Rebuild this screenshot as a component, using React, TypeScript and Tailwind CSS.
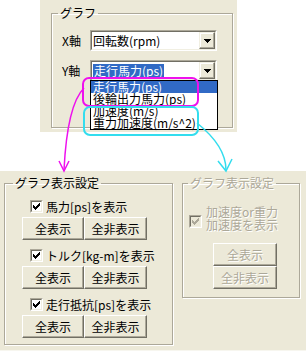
import React from "react";

const GRAY = "bg-[#ECE9D8]";

function Check({ disabled = false }: { disabled?: boolean }) {
  return (
    <div
      className={`w-[13px] h-[13px] shrink-0 border border-t-[#ACA899] border-l-[#ACA899] border-b-white border-r-white`}
    >
      <div
        className={`w-full h-full border border-t-[#716F64] border-l-[#716F64] border-b-[#F1EFE2] border-r-[#F1EFE2] flex items-center justify-center ${
          disabled ? "bg-[#ECE9D8]" : "bg-white"
        }`}
      >
        <svg width="7" height="7" viewBox="0 0 7 7" shapeRendering="crispEdges">
          <path
            d="M6 0h1v3h-1zM5 1h1v3h-1zM4 2h1v3h-1zM3 3h1v3h-1zM2 4h1v3h-1zM1 3h1v3h-1zM0 2h1v3h-1z"
            fill={disabled ? "#ACA899" : "#000"}
          />
        </svg>
      </div>
    </div>
  );
}

function Btn({
  label,
  w,
  disabled = false,
}: {
  label: string;
  w: string;
  disabled?: boolean;
}) {
  return (
    <div
      className={`${w} h-[23px] ${GRAY} border border-t-white border-l-white border-r-[#716F64] border-b-[#716F64] shadow-[inset_-1px_-1px_0_#ACA899] flex items-center justify-center leading-[14px] ${
        disabled ? "text-[#ACA899] [text-shadow:1px_1px_0_#fff]" : "text-black"
      }`}
    >
      {label}
    </div>
  );
}

function ComboBtn() {
  return (
    <div
      className={`w-[16px] h-[17px] ${GRAY} border border-t-[#F1EFE2] border-l-[#F1EFE2] border-r-[#716F64] border-b-[#716F64] shadow-[inset_-1px_-1px_0_#ACA899,inset_1px_1px_0_#fff] flex items-center justify-center`}
    >
      <svg width="7" height="4" viewBox="0 0 7 4" shapeRendering="crispEdges">
        <path d="M0 0h7v1h-7zM1 1h5v1h-5zM2 2h3v1h-3zM3 3h1v1h-1z" fill="#000" />
      </svg>
    </div>
  );
}

function Combo({ children }: { children: React.ReactNode }) {
  return (
    <div className="w-[127px] h-[21px] border border-t-[#ACA899] border-l-[#ACA899] border-b-white border-r-white">
      <div className="w-full h-full border border-t-[#716F64] border-l-[#716F64] border-b-[#F1EFE2] border-r-[#F1EFE2] bg-white flex items-center justify-between">
        <div className="pl-[1px] flex items-center leading-[14px]">{children}</div>
        <ComboBtn />
      </div>
    </div>
  );
}

const frame =
  "border border-[#ACA899] shadow-[1px_1px_0_#fff,inset_1px_1px_0_#fff]";

function Section({ label }: { label: string }) {
  return (
    <>
      <div className="flex items-center gap-[3px] pl-[25px] h-[13px]">
        <Check />
        <span className="leading-[13px] whitespace-nowrap">{label}</span>
      </div>
      <div className="flex pl-[17px] mt-[4px]">
        <Btn label="全表示" w="w-[62px]" />
        <Btn label="全非表示" w="w-[63px]" />
      </div>
    </>
  );
}

export default function App() {
  return (
    <div className="relative w-[306px] h-[351px] bg-white overflow-hidden font-['Noto_Sans_CJK_JP',sans-serif] text-[12px] text-black">
      {/* top panel */}
      <div className={`ml-[40px] w-[197px] h-[132px] ${GRAY} pt-[6px] pl-[11px]`}>
        <fieldset className={`w-[182px] h-[122px] ${frame}`}>
          <legend className="ml-[6px] px-[2px] leading-[14px]">グラフ</legend>
          <div className="flex flex-col pl-[10px] pt-[10px] gap-[9px]">
            <div className="flex items-center">
              <span className="w-[28px] leading-[14px]">X軸</span>
              <Combo>回転数(rpm)</Combo>
            </div>
            <div className="flex items-center">
              <span className="w-[28px] leading-[14px]">Y軸</span>
              <Combo>
                <span className="bg-[#316AC5] text-white px-[1px]">走行馬力(ps)</span>
              </Combo>
            </div>
          </div>
        </fieldset>
      </div>

      {/* bottom panel */}
      <div className={`mt-[39px] h-[180px] ${GRAY} pt-[5px] flex items-start border-b border-b-[#F7F6EF]`}>
        <fieldset className={`ml-[4px] w-[169px] h-[169px] ${frame}`}>
          <legend className="ml-[8px] px-[2px] leading-[14px]">グラフ表示設定</legend>
          <div className="flex flex-col pt-[10px]">
            <Section label="馬力[ps]を表示" />
            <div className="h-[9px]" />
            <Section label="トルク[kg-m]を表示" />
            <div className="h-[9px]" />
            <Section label="走行抵抗[ps]を表示" />
          </div>
        </fieldset>
        <fieldset className={`ml-[9px] w-[118px] h-[122px] ${frame}`}>
          <legend className="ml-[5px] px-[2px] leading-[14px] text-[#ACA899] [text-shadow:1px_1px_0_#fff]">
            グラフ表示設定
          </legend>
          <div className="flex flex-col pt-[15px]">
            <div className="flex items-start gap-[4px] pl-[6px]">
              <div className="mt-[10px]">
                <Check disabled />
              </div>
              <div className="leading-[13px] text-[#ACA899] [text-shadow:1px_1px_0_#fff]">
                <div>加速度or重力</div>
                <div>加速度を表示</div>
              </div>
            </div>
            <div className="flex flex-col pl-[30px] mt-[12px]">
              <Btn label="全表示" w="w-[64px]" disabled />
              <Btn label="全非表示" w="w-[64px]" disabled />
            </div>
          </div>
        </fieldset>
      </div>

      {/* open dropdown list */}
      <div className="absolute left-[90px] top-[80px] w-[128px] h-[50px] bg-white border border-black leading-[12px]">
        <div className="h-[12px] bg-[#316AC5] text-white pl-[2px]">走行馬力(ps)</div>
        <div className="h-[12px] pl-[2px]">後輪出力馬力(ps)</div>
        <div className="h-[12px] pl-[2px]">加速度(m/s)</div>
        <div className="h-[12px] pl-[2px]">重力加速度(m/s^2)</div>
      </div>

      {/* annotations */}
      <svg
        className="absolute left-0 top-0 pointer-events-none"
        width="306"
        height="351"
        viewBox="0 0 306 351"
        fill="none"
      >
        <rect x="83" y="78" width="115" height="28" rx="6" stroke="#EE11EE" strokeWidth="2" />
        <rect x="84" y="107" width="114" height="28" rx="6" stroke="#33DDEE" strokeWidth="2" />
        <path d="M84 88 C 72 100, 66 130, 64 170" stroke="#EE11EE" strokeWidth="1.5" />
        <path d="M59 161 L64 171 L69 161" stroke="#EE11EE" strokeWidth="1.5" />
        <path d="M197 123 C 212 135, 226 150, 226 170" stroke="#33DDEE" strokeWidth="1.5" />
        <path d="M218 161 L226 171 L232 159" stroke="#33DDEE" strokeWidth="1.5" />
      </svg>
    </div>
  );
}
